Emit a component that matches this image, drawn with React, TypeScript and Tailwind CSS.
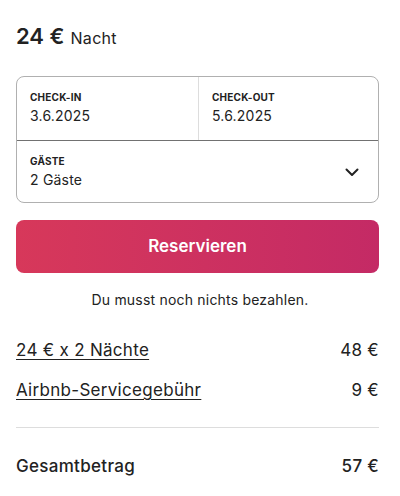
import React from "react";

export default function App() {
  return (
    <div
      className="w-[400px] h-[496px] bg-white text-[#222222] px-4 overflow-hidden"
      style={{ fontFamily: "Inter, 'Noto Sans', sans-serif" }}
    >
      <div className="pt-[22px] flex items-baseline gap-[6px]">
        <span className="text-[22px] font-semibold leading-[28px]">24 €</span>
        <span className="text-[16px] leading-[28px] tracking-[0.3px]">Nacht</span>
      </div>

      <div className="mt-[24px] border border-[#b0b0b0] rounded-[8px] w-[363px]">
        <div className="flex h-[63px]">
          <div className="w-[182px] border-r border-[#dddddd] px-[13px] pt-[14px]">
            <div className="text-[10px] font-bold leading-[12px] tracking-[0.2px]">CHECK-IN</div>
            <div className="text-[14px] leading-[18px] mt-[4px] tracking-[0.2px]">3.6.2025</div>
          </div>
          <div className="flex-1 px-[13px] pt-[14px]">
            <div className="text-[10px] font-bold leading-[12px] tracking-[0.2px]">CHECK-OUT</div>
            <div className="text-[14px] leading-[18px] mt-[4px] tracking-[0.2px]">5.6.2025</div>
          </div>
        </div>
        <div className="border-t border-[#717171] h-[62px] flex items-center justify-between pl-[13px] pr-[18px]">
          <div className="pt-[1px]">
            <div className="text-[10px] font-bold leading-[12px] tracking-[0.2px]">GÄSTE</div>
            <div className="text-[14px] leading-[18px] mt-[4px] tracking-[0.2px]">2 Gäste</div>
          </div>
          <svg width="16" height="16" viewBox="0 0 16 16" fill="none">
            <path d="M2.5 5.5 L8 11 L13.5 5.5" stroke="#222222" strokeWidth="2" strokeLinecap="round" strokeLinejoin="round" />
          </svg>
        </div>
      </div>

      <button
        className="mt-[17px] w-[363px] h-[53px] rounded-[8px] bg-gradient-to-r from-[#d7385a] to-[#c42a65] text-white text-[17px] font-semibold flex items-center justify-center"
      >
        Reservieren
      </button>

      <div className="mt-[18px] text-center text-[14px] leading-[18px] tracking-[0.2px]">Du musst noch nichts bezahlen.</div>

      <div className="mt-[31px] w-[363px] text-[17px] tracking-[0.3px]">
        <div className="flex justify-between leading-[20px]">
          <span className="underline underline-offset-[3px]">24 € x 2 Nächte</span>
          <span>48 €</span>
        </div>
        <div className="flex justify-between leading-[20px] mt-[20px]">
          <span className="underline underline-offset-[3px]">Airbnb-Servicegebühr</span>
          <span>9 €</span>
        </div>
        <div className="border-t border-[#dddddd] mt-[27px]" />
        <div className="flex justify-between leading-[20px] mt-[28px] font-medium">
          <span>Gesamtbetrag</span>
          <span>57 €</span>
        </div>
      </div>
    </div>
  );
}
